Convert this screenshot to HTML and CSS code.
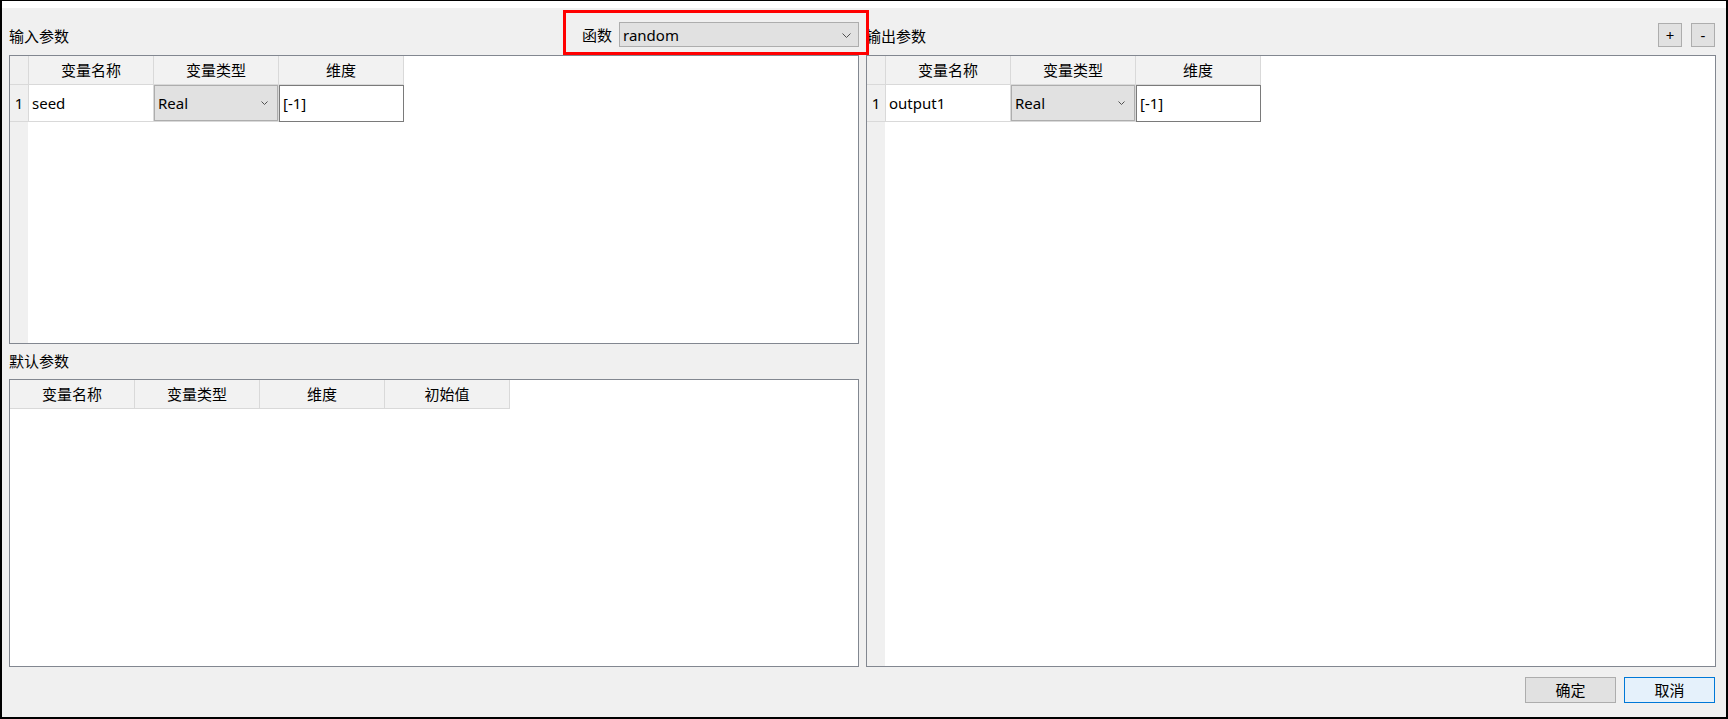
FILE: index.html
```html
<!DOCTYPE html>
<html lang="zh-CN">
<head>
<meta charset="utf-8">
<title>函数参数</title>
<link rel="stylesheet" href="styles.css">
</head>
<body>
<div class="window">
  <div class="window-top"></div>
  <div class="dialog">
    <div class="panes">
      <!-- left header: caption + function picker -->
      <div class="pane-head">
        <div class="caption">输入参数</div>
        <div class="func">
          <span class="func-label">函数</span>
          <div class="func-combo">
            <span>random</span>
            <svg class="chev" width="9" height="5" viewBox="0 0 9 5"><polyline points="0.5,0.5 4.5,4.5 8.5,0.5" fill="none" stroke="#505050" stroke-width="1"/></svg>
          </div>
        </div>
      </div>

      <!-- right header: caption + add/remove -->
      <div class="pane-head">
        <div class="caption">输出参数</div>
        <div class="tools">
          <div class="tool-btn">+</div>
          <div class="tool-btn">-</div>
        </div>
      </div>

      <!-- left column: input params + default params -->
      <div class="left-col">
        <div class="tbl with-vh">
          <div class="tbl-grid cols-io">
            <div class="th corner"></div>
            <div class="th">变量名称</div>
            <div class="th">变量类型</div>
            <div class="th">维度</div>
            <div class="vh">1</div>
            <div class="td">seed</div>
            <div class="td td-combo"><div class="cell-combo"><span>Real</span><svg width="7" height="4" viewBox="0 0 7 4"><polyline points="0.5,0.5 3.5,3.5 6.5,0.5" fill="none" stroke="#505050" stroke-width="1"/></svg></div></div>
            <div class="td td-edit">[-1]</div>
          </div>
        </div>

        <div class="sub-caption">默认参数</div>

        <div class="tbl">
          <div class="tbl-grid cols-default">
            <div class="th">变量名称</div>
            <div class="th">变量类型</div>
            <div class="th">维度</div>
            <div class="th">初始值</div>
          </div>
        </div>
      </div>

      <!-- right column: output params -->
      <div class="tbl with-vh">
        <div class="tbl-grid cols-io">
          <div class="th corner"></div>
          <div class="th">变量名称</div>
          <div class="th">变量类型</div>
          <div class="th">维度</div>
          <div class="vh">1</div>
          <div class="td">output1</div>
          <div class="td td-combo"><div class="cell-combo"><span>Real</span><svg width="7" height="4" viewBox="0 0 7 4"><polyline points="0.5,0.5 3.5,3.5 6.5,0.5" fill="none" stroke="#505050" stroke-width="1"/></svg></div></div>
          <div class="td td-edit">[-1]</div>
        </div>
      </div>
    </div>

    <div class="footer">
      <div class="btn">确定</div>
      <div class="btn btn-default">取消</div>
    </div>
  </div>
</div>
</body>
</html>
```
FILE: styles.css
```css
* {
  box-sizing: border-box;
}

html,
body {
  margin: 0;
  padding: 0;
}

body {
  width: 1728px;
  height: 719px;
  overflow: hidden;
  background: #fff;
  font-family: "Noto Sans", "Noto Sans CJK SC", sans-serif;
  font-size: 15px;
  color: #000;
}

.window {
  width: 1728px;
  height: 719px;
  border-style: solid;
  border-color: #000;
  border-width: 1px 2px 2px 2px;
  background: #f0f0f0;
  display: flex;
  flex-direction: column;
}

.window-top {
  flex: none;
  height: 7px;
  background: #fff;
}

.dialog {
  flex: 1;
  display: flex;
  flex-direction: column;
  padding: 0 10px 14px 7px;
}

.panes {
  display: grid;
  grid-template-columns: 850px 850px;
  grid-template-rows: 39px 612px;
  column-gap: 7px;
  row-gap: 8px;
}

.pane-head {
  display: flex;
  align-items: flex-end;
  justify-content: space-between;
}

.caption {
  line-height: 20px;
  padding-bottom: 1px;
  white-space: nowrap;
}

/* function picker with highlight frame */
.func {
  position: relative;
  display: flex;
  align-items: center;
}

.func::after {
  content: "";
  position: absolute;
  left: -19px;
  top: -12px;
  right: -10px;
  bottom: -8px;
  border: 3px solid #ff0000;
  pointer-events: none;
  z-index: 2;
}

.func-label {
  width: 30px;
  margin-right: 7px;
  line-height: 20px;
}

.func-combo {
  width: 240px;
  height: 25px;
  background: #e1e1e1;
  border: 1px solid #adadad;
  display: flex;
  align-items: center;
  justify-content: space-between;
  padding: 0 7px 0 3px;
}

.func-combo .chev {
  margin-top: 2px;
}

.tools {
  display: flex;
  gap: 9px;
  margin-right: 1px;
}

.tool-btn {
  width: 24px;
  height: 24px;
  background: #e1e1e1;
  border: 1px solid #adadad;
  display: flex;
  align-items: center;
  justify-content: center;
  line-height: 1;
}

/* left column stack */
.left-col {
  display: grid;
  grid-template-rows: 289px 35px 1fr;
  min-height: 0;
}

.sub-caption {
  padding-top: 7px;
  line-height: 20px;
}

/* item views */
.tbl {
  background: #fff;
  border: 1px solid #828790;
  overflow: hidden;
}

.tbl.with-vh {
  background: linear-gradient(to right, #f0f0f0 18px, #fff 18px);
}

.tbl-grid {
  display: grid;
  align-content: start;
}

.cols-io {
  grid-template-columns: 19px 125px 125px 125px;
  grid-template-rows: 29px 37px;
}

.cols-default {
  grid-template-columns: 125px 125px 125px 125px;
  grid-template-rows: 29px;
}

.th {
  height: 29px;
  background: #f2f2f2;
  border-right: 1px solid #d9d9d9;
  border-bottom: 1px solid #d9d9d9;
  text-align: center;
  line-height: 28px;
  white-space: nowrap;
}

.th.corner {
  background: #f0f0f0;
}

.vh {
  height: 37px;
  border-right: 1px solid #d9d9d9;
  border-bottom: 1px solid #d9d9d9;
  text-align: center;
  line-height: 36px;
}

.td {
  height: 37px;
  background: #fff;
  border-right: 1px solid #d9d9d9;
  border-bottom: 1px solid #d9d9d9;
  padding-left: 3px;
  line-height: 36px;
  white-space: nowrap;
}

.td-combo {
  padding: 0;
}

.cell-combo {
  height: 100%;
  background: #e1e1e1;
  border: 1px solid #adadad;
  display: flex;
  align-items: center;
  justify-content: space-between;
  padding: 0 9px 0 3px;
  line-height: 34px;
}

.td-edit {
  border: 1px solid #7a7a7a;
  line-height: 34px;
}

/* dialog buttons */
.footer {
  display: flex;
  justify-content: flex-end;
  gap: 8px;
  margin-top: 10px;
  padding-right: 1px;
}

.btn {
  width: 91px;
  height: 26px;
  background: #e1e1e1;
  border: 1px solid #adadad;
  display: flex;
  align-items: center;
  justify-content: center;
  line-height: 1;
}

.btn-default {
  background: #e5f1fb;
  border-color: #0078d7;
}
```
